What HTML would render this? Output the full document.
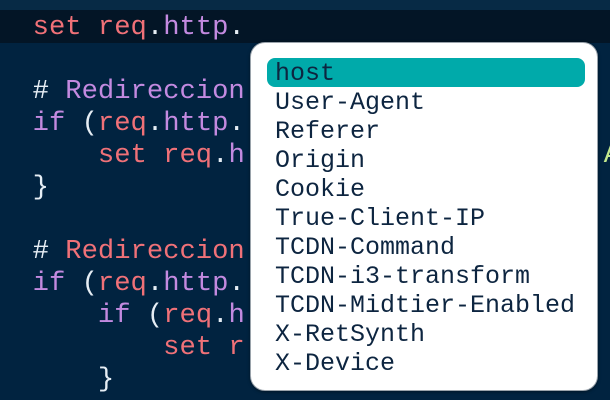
<!DOCTYPE html>
<html><head><style>
body{margin:0;width:610px;height:400px;overflow:hidden;background:#012340;position:relative;font-family:"Liberation Mono",monospace}
.top{position:absolute;left:0;top:0;width:610px;height:10px;background:#072a45}
.hl{position:absolute;left:0;top:10px;width:610px;height:33px;background:#031526}
.code{position:absolute;left:0;top:12px;font-size:27.2px;line-height:32px;white-space:pre;color:#e6eef5}
.r{color:#f07178}.p{color:#c38ae0}.g{color:#c3e88d}.w{color:#e6eef5}
.pop{position:absolute;left:250px;top:42px;width:346px;height:347px;background:#fff;border:1px solid #9aa3ab;border-radius:15px;box-shadow:0 1px 3px rgba(0,0,0,.4)}
.sel{position:absolute;left:16px;top:15px;width:318px;height:29px;background:#00aaaa;border-radius:8px}
.items{position:absolute;left:24px;top:16px;font-size:25px;line-height:29px;color:#0d2540;white-space:pre}
</style></head><body>
<div class="top"></div><div class="hl"></div>
<div class="code">  <span class="r">set req</span>.<span class="p">http</span>.

  # <span class="p">Redireccion</span>
  <span class="p">if</span> (<span class="r">req</span>.<span class="p">http</span>.                  <span class="g">e</span>
      <span class="r">set req</span>.<span class="p">h</span>                      <span class="g">A</span>
  }

  # <span class="r">Redireccion</span>
  <span class="p">if</span> (<span class="r">req</span>.<span class="p">http</span>.                  <span class="g">'</span>
      <span class="p">if</span> (<span class="r">req</span>.<span class="p">h</span>                  <span class="g">n</span>
          <span class="r">set r</span>                  <span class="g">'</span>
      }</div>
<div class="pop"><div class="sel"></div><div class="items">host
User-Agent
Referer
Origin
Cookie
True-Client-IP
TCDN-Command
TCDN-i3-transform
TCDN-Midtier-Enabled
X-RetSynth
X-Device</div></div>
</body></html>
